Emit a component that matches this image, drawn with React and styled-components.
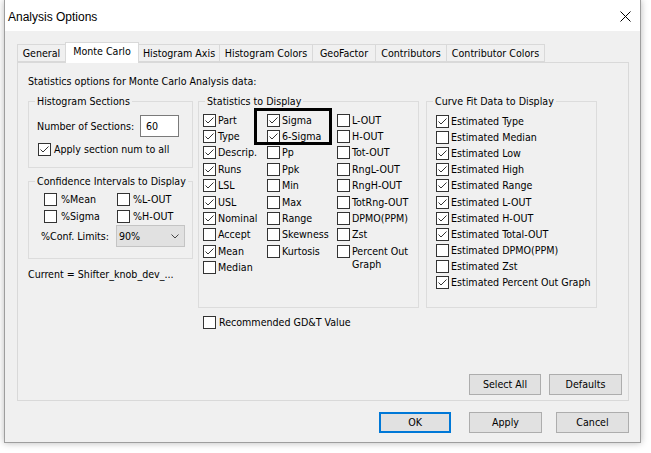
import React from "react";
import styled, { createGlobalStyle } from "styled-components";

const GlobalStyle = createGlobalStyle`
  html, body { margin: 0; padding: 0; background: #ffffff; }
  body { font-family: "Liberation Sans", Arial, sans-serif; color: #000; }
  * { box-sizing: border-box; }
`;

const Page = styled.div`
  width: 651px;
  height: 453px;
  padding-left: 4px;
  background: #ffffff;
`;

const Window = styled.div`
  width: 637px;
  height: 443px;
  border: 1px solid #9e9e9e;
  border-top: none;
  background: #f0f0f0;
  box-shadow: 0 0 7px rgba(0, 0, 0, 0.28);
  display: flex;
  flex-direction: column;
`;

const TitleBar = styled.div`
  height: 31px;
  background: #ffffff;
  display: flex;
  align-items: center;
  justify-content: space-between;
  padding: 2px 9px 0 3px;
  font-size: 12px;
`;

const Body = styled.div`
  flex: 1;
  display: flex;
  flex-direction: column;
  padding: 11px 11px 9px 12px;
  font-family: "DejaVu Sans", sans-serif;
  font-stretch: condensed;
  font-size: 10.6px;
  line-height: 13px;
`;

const TabStrip = styled.div`
  display: flex;
  align-items: flex-end;
  height: 20px;
  position: relative;
  z-index: 1;
`;

const Tab = styled.div`
  width: ${(p) => p.$w}px;
  height: ${(p) => (p.$active ? 21 : 18)}px;
  margin-bottom: ${(p) => (p.$active ? -1 : 0)}px;
  margin-left: ${(p) => (p.$first ? 0 : -1)}px;
  border: 1px solid #d9d9d9;
  border-bottom: ${(p) => (p.$active ? "none" : "1px solid #d9d9d9")};
  background: ${(p) => (p.$active ? "#ffffff" : "#f0f0f0")};
  display: flex;
  align-items: center;
  justify-content: center;
  padding-bottom: ${(p) => (p.$active ? 3 : 0)}px;
  white-space: nowrap;
  z-index: ${(p) => (p.$active ? 2 : 1)};
`;

const Panel = styled.div`
  width: 612px;
  height: 339px;
  border: 1px solid #d9d9d9;
  background: #f0f0f0;
  padding: 12px 6px 5px 10px;
  display: flex;
  flex-direction: column;
`;

const Header = styled.div`
  margin-bottom: 7px;
`;

const Columns = styled.div`
  display: grid;
  grid-template-columns: 170px 228px 171px;
  align-items: start;
`;

const Group = styled.fieldset`
  margin: 0;
  padding: 0;
  min-width: 0;
  width: ${(p) => p.$w}px;
  height: ${(p) => p.$h}px;
  border: 1px solid #dcdcdc;
  margin-bottom: ${(p) => p.$mb || 0}px;
`;

const Legend = styled.legend`
  margin-left: 6px;
  padding: 0 2px;
  line-height: 13px;
`;

const GroupInner = styled.div`
  padding: ${(p) => p.$pad};
  position: relative;
`;

const FieldRow = styled.div`
  display: flex;
  align-items: center;
  height: ${(p) => p.$h || 13}px;
  margin-top: ${(p) => p.$mt || 0}px;
  padding-left: ${(p) => p.$pl || 0}px;
`;

const FieldLabel = styled.span`
  width: ${(p) => p.$w}px;
  flex: none;
  white-space: nowrap;
`;

const NumberBox = styled.div`
  width: 39px;
  height: 22px;
  background: #ffffff;
  border: 1px solid #7a7a7a;
  display: flex;
  align-items: center;
  padding-left: 5px;
`;

const Combo = styled.div`
  width: 69px;
  height: 22px;
  background: #e1e1e1;
  border: 1px solid #c4c4c4;
  display: flex;
  align-items: center;
  justify-content: space-between;
  padding: 0 5px 0 2px;
`;

const PairGrid = styled.div`
  display: grid;
  grid-template-columns: 73px 60px;
  row-gap: 4px;
  padding-left: 15px;
`;

const Note = styled.div`
  margin-top: 9px;
  white-space: nowrap;
`;

const StatGrid = styled.div`
  display: grid;
  grid-template-columns: 64px 70px 1fr;
  position: relative;
`;

const Column = styled.div`
  display: flex;
  flex-direction: column;
`;

const Item = styled.label`
  display: flex;
  align-items: ${(p) => (p.$tall ? "flex-start" : "center")};
  gap: ${(p) => p.$gap ?? 2}px;
  height: ${(p) => (p.$tall ? "auto" : `${p.$h}px`)};
  padding-top: ${(p) => (p.$tall ? (p.$h - 13) / 2 : 0)}px;
  white-space: ${(p) => (p.$tall ? "normal" : "nowrap")};
`;

const ItemText = styled.span`
  max-width: ${(p) => (p.$maxw ? `${p.$maxw}px` : "none")};
`;

const Box = styled.span`
  width: 13px;
  height: 13px;
  flex: none;
  background: #ffffff;
  border: 1px solid #333333;
  display: flex;
  align-items: center;
  justify-content: center;
`;

const Highlight = styled.div`
  position: absolute;
  left: 51px;
  top: -4px;
  width: 78px;
  height: 37px;
  border: 3px solid #000000;
  pointer-events: none;
`;

const GDTRow = styled.div`
  grid-column: 2;
  padding-left: 5px;
  margin-top: 8px;
`;

const ButtonRow = styled.div`
  display: flex;
  justify-content: flex-end;
  gap: ${(p) => p.$gap ?? 8}px;
  margin-top: ${(p) => (p.$auto ? "auto" : `${p.$mt || 0}px`)};
  margin-right: ${(p) => p.$mr || 0}px;
`;

const Button = styled.div`
  width: ${(p) => p.$w || 72}px;
  height: 21px;
  background: #e1e1e1;
  border: ${(p) => (p.$default ? "2px solid #0078d7" : "1px solid #adadad")};
  display: flex;
  align-items: center;
  justify-content: center;
  margin-right: ${(p) => p.$mr || 0}px;
`;

const Check = ({ checked }) => (
  <Box>
    {checked ? (
      <svg width="11" height="11" viewBox="0 0 11 11">
        <polyline points="1.5,5.5 4,8 9.5,2.5" fill="none" stroke="#333" strokeWidth="1" />
      </svg>
    ) : null}
  </Box>
);

const CheckItem = ({ label, checked, h = 13, gap, tall, maxw }) => (
  <Item $h={h} $gap={gap} $tall={tall}>
    <Check checked={checked} />
    <ItemText $maxw={maxw}>{label}</ItemText>
  </Item>
);

const tabs = [
  ["General", 49],
  ["Monte Carlo", 74, true],
  ["Histogram Axis", 82],
  ["Histogram Colors", 94],
  ["GeoFactor", 64],
  ["Contributors", 72],
  ["Contributor Colors", 99],
];

const col1 = [
  ["Part", 1], ["Type", 1], ["Descrip.", 1], ["Runs", 1], ["LSL", 1],
  ["USL", 1], ["Nominal", 1], ["Accept", 0], ["Mean", 1], ["Median", 0],
];
const col2 = [
  ["Sigma", 1], ["6-Sigma", 1], ["Pp", 0], ["Ppk", 0], ["Min", 0],
  ["Max", 0], ["Range", 0], ["Skewness", 0], ["Kurtosis", 0],
];
const col3 = [
  ["L-OUT", 0], ["H-OUT", 0], ["Tot-OUT", 0], ["RngL-OUT", 0], ["RngH-OUT", 0],
  ["TotRng-OUT", 0], ["DPMO(PPM)", 0], ["Zst", 0],
];
const curve = [
  ["Estimated Type", 1], ["Estimated Median", 0], ["Estimated Low", 1],
  ["Estimated High", 1], ["Estimated Range", 1], ["Estimated L-OUT", 1],
  ["Estimated H-OUT", 1], ["Estimated Total-OUT", 1], ["Estimated DPMO(PPM)", 0],
  ["Estimated Zst", 0], ["Estimated Percent Out Graph", 1],
];

export default function App() {
  return (
    <Page>
      <GlobalStyle />
      <Window>
        <TitleBar>
          <span>Analysis Options</span>
          <svg width="11" height="11" viewBox="0 0 11 11">
            <path d="M0.5 0.5 L10.5 10.5 M10.5 0.5 L0.5 10.5" stroke="#000" strokeWidth="1" />
          </svg>
        </TitleBar>
        <Body>
          <TabStrip>
            {tabs.map(([t, w, a], i) => (
              <Tab key={t} $w={w} $active={a} $first={i === 0}>
                {t}
              </Tab>
            ))}
          </TabStrip>
          <Panel>
            <Header>Statistics options for Monte Carlo Analysis data:</Header>
            <Columns>
              <div>
                <Group $w={165} $h={73} $mb={7}>
                  <Legend>Histogram Sections</Legend>
                  <GroupInner $pad="7px 0 0 8px">
                    <FieldRow $h={22}>
                      <FieldLabel $w={103}>Number of Sections:</FieldLabel>
                      <NumberBox>60</NumberBox>
                    </FieldRow>
                    <FieldRow $mt={6} $pl={1}>
                      <CheckItem label="Apply section num to all" checked gap={3} />
                    </FieldRow>
                  </GroupInner>
                </Group>
                <Group $w={165} $h={84}>
                  <Legend>Confidence Intervals to Display</Legend>
                  <GroupInner $pad="5px 0 0 0">
                    <PairGrid>
                      <CheckItem label="%Mean" gap={4} />
                      <CheckItem label="%L-OUT" gap={3} />
                      <CheckItem label="%Sigma" gap={4} />
                      <CheckItem label="%H-OUT" gap={3} />
                    </PairGrid>
                    <FieldRow $h={22} $mt={2} $pl={12}>
                      <FieldLabel $w={75}>%Conf. Limits:</FieldLabel>
                      <Combo>
                        <span>90%</span>
                        <svg width="8" height="5" viewBox="0 0 8 5">
                          <polyline points="0.5,0.5 4,4 7.5,0.5" fill="none" stroke="#444" strokeWidth="1" />
                        </svg>
                      </Combo>
                    </FieldRow>
                  </GroupInner>
                </Group>
                <Note>Current = Shifter_knob_dev_...</Note>
              </div>
              <Group $w={221} $h={213}>
                <Legend>Statistics to Display</Legend>
                <GroupInner $pad="4px 0 0 4px">
                  <StatGrid>
                    <Column>
                      {col1.map(([l, c]) => (
                        <CheckItem key={l} label={l} checked={!!c} h={16.4} />
                      ))}
                    </Column>
                    <Column>
                      {col2.map(([l, c]) => (
                        <CheckItem key={l} label={l} checked={!!c} h={16.4} />
                      ))}
                    </Column>
                    <Column>
                      {col3.map(([l, c]) => (
                        <CheckItem key={l} label={l} checked={!!c} h={16.4} />
                      ))}
                      <CheckItem label="Percent Out Graph" h={16.4} tall maxw={66} />
                    </Column>
                    <Highlight />
                  </StatGrid>
                </GroupInner>
              </Group>
              <Group $w={171} $h={213}>
                <Legend>Curve Fit Data to Display</Legend>
                <GroupInner $pad="5px 0 0 9px">
                  <Column>
                    {curve.map(([l, c]) => (
                      <CheckItem key={l} label={l} checked={!!c} h={16.2} />
                    ))}
                  </Column>
                </GroupInner>
              </Group>
              <GDTRow>
                <CheckItem label="Recommended GD&T Value" gap={3} />
              </GDTRow>
            </Columns>
            <ButtonRow $auto $gap={8}>
              <Button $w={72}>Select All</Button>
              <Button $w={73}>Defaults</Button>
            </ButtonRow>
          </Panel>
          <ButtonRow $mt={11} $gap={0}>
            <Button $w={72} $default $mr={18}>OK</Button>
            <Button $w={73} $mr={14}>Apply</Button>
            <Button $w={73}>Cancel</Button>
          </ButtonRow>
        </Body>
      </Window>
    </Page>
  );
}
